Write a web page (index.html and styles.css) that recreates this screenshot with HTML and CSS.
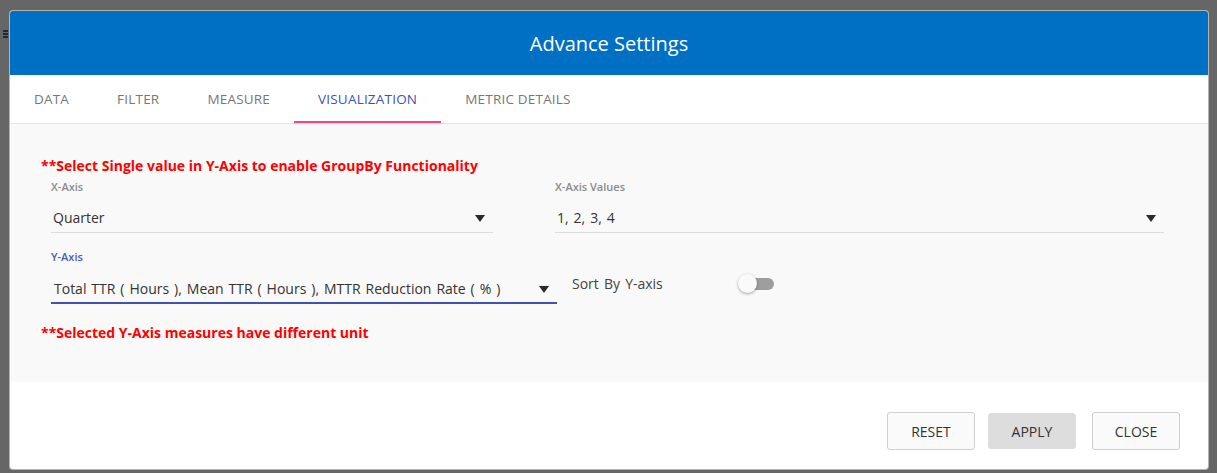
FILE: index.html
```html
<!DOCTYPE html>
<html>
<head>
<meta charset="utf-8">
<link rel="stylesheet" href="styles.css">
</head>
<body>
<div class="backdrop-icon">
  <span></span><span></span><span></span>
</div>
<div class="dialog">
  <div class="dialog-header">Advance Settings</div>
  <div class="tabs">
    <div class="tab">DATA</div>
    <div class="tab">FILTER</div>
    <div class="tab">MEASURE</div>
    <div class="tab active">VISUALIZATION</div>
    <div class="tab">METRIC DETAILS</div>
  </div>
  <div class="content">
    <div class="warning">**Select Single value in Y-Axis to enable GroupBy Functionality</div>
    <div class="row">
      <div class="field field-x">
        <div class="label">X-Axis</div>
        <div class="select">
          <span class="value">Quarter</span>
          <span class="arrow"></span>
        </div>
      </div>
      <div class="field field-xv">
        <div class="label">X-Axis Values</div>
        <div class="select">
          <span class="value">1, 2, 3, 4</span>
          <span class="arrow"></span>
        </div>
      </div>
    </div>
    <div class="row row-y">
      <div class="field field-y">
        <div class="label label-focus">Y-Axis</div>
        <div class="select select-focus">
          <span class="value">Total TTR ( Hours ), Mean TTR ( Hours ), MTTR Reduction Rate ( % )</span>
          <span class="arrow"></span>
        </div>
      </div>
      <div class="sort">
        <span class="sort-label">Sort By Y-axis</span>
        <span class="toggle"><span class="thumb"></span></span>
      </div>
    </div>
    <div class="warning warning-2">**Selected Y-Axis measures have different unit</div>
  </div>
  <div class="footer">
    <button class="btn btn-reset">RESET</button>
    <button class="btn btn-apply">APPLY</button>
    <button class="btn">CLOSE</button>
  </div>
</div>
</body>
</html>
```

FILE: styles.css
```css
html, body {
  margin: 0;
  padding: 0;
}
body {
  background: #666666;
  width: 1217px;
  height: 473px;
  overflow: hidden;
  font-family: "Open Sans", "Liberation Sans", sans-serif;
  position: relative;
}
.backdrop-icon {
  position: absolute;
  left: 3px;
  top: 30px;
  display: flex;
  flex-direction: column;
  gap: 1px;
}
.backdrop-icon span {
  width: 5px;
  height: 2px;
  background: #1e2a3a;
}
.dialog {
  position: absolute;
  left: 10px;
  top: 11px;
  width: 1198px;
  height: 458px;
  background: #ffffff;
  border-radius: 3px;
  overflow: hidden;
  display: flex;
  flex-direction: column;
  box-shadow: 0 0 0 1px rgba(255,255,255,0.5);
}
.dialog-header {
  height: 64px;
  background: #0070c4;
  color: #ffffff;
  font-size: 20px;
  display: flex;
  align-items: center;
  justify-content: center;
  flex-shrink: 0;
}
.tabs {
  height: 48px;
  display: flex;
  border-bottom: 1px solid #e6e6e6;
  flex-shrink: 0;
}
.tab {
  padding: 0 24px;
  display: flex;
  align-items: center;
  font-size: 13.5px;
  letter-spacing: 0.2px;
  color: #777777;
  border-bottom: 2px solid transparent;
  padding-top: 2px;
}
.tab.active {
  color: #3f51b5;
  border-bottom-color: #ff4081;
}
.content {
  background: #f9f9f9;
  height: 258px;
  box-sizing: border-box;
  padding: 33px 0 0 31px;
  flex-shrink: 0;
}
.warning {
  color: #ff0000;
  font-weight: bold;
  font-size: 14px;
  line-height: 18px;
}
.warning-2 {
  margin-top: 20px;
}
.row {
  display: flex;
  margin-top: 5px;
  padding-left: 10px;
}
.row-y {
  margin-top: 17px;
  align-items: flex-start;
}
.field-x { width: 442px; margin-right: 62px; }
.field-xv { width: 609px; }
.field-y { width: 506px; }
.label {
  font-size: 11px;
  line-height: 14px;
  color: #8c8c8c;
  font-weight: 600;
}
.label-focus {
  color: #4a5bc4;
}
.select {
  display: flex;
  align-items: center;
  justify-content: space-between;
  padding: 14px 8px 4px 2px;
  line-height: 20px;
  font-size: 14px;
  word-spacing: 1.3px;
  color: #333333;
  border-bottom: 1px solid #dcdcdc;
}
.select-focus {
  padding: 15px 8px 3px 3px;
  border-bottom: 2px solid #3f51b5;
}
.arrow {
  width: 0;
  height: 0;
  border-left: 5px solid transparent;
  border-right: 5px solid transparent;
  border-top: 7px solid #2a2a2a;
}
.sort {
  display: flex;
  align-items: center;
  margin-left: 15px;
  margin-top: 24px;
}
.sort-label {
  font-size: 14px;
  word-spacing: 1.5px;
  color: #444444;
  width: 166px;
}
.toggle {
  position: relative;
  width: 34px;
  height: 12px;
  border-radius: 6px;
  background: #9e9e9e;
  margin-left: 2px;
}
.thumb {
  position: absolute;
  left: -2px;
  top: -4px;
  width: 19px;
  height: 19px;
  border-radius: 50%;
  background: #fafafa;
  box-shadow: 0 1px 3px rgba(0,0,0,0.35);
}
.footer {
  flex: 1;
  display: flex;
  justify-content: flex-end;
  align-items: flex-start;
  padding: 30px 28px 0 0;
}
.btn {
  width: 88px;
  height: 38px;
  border: 1px solid #d0d0d0;
  border-radius: 3px;
  background: #fafafa;
  color: #333333;
  font-family: "Open Sans", "Liberation Sans", sans-serif;
  font-size: 14px;
  padding: 0;
}
.btn-reset {
  margin-right: 13px;
}
.btn-apply {
  background: #dddddd;
  border-color: #dddddd;
  margin-right: 16px;
  height: 36px;
  margin-top: 1px;
}
```
